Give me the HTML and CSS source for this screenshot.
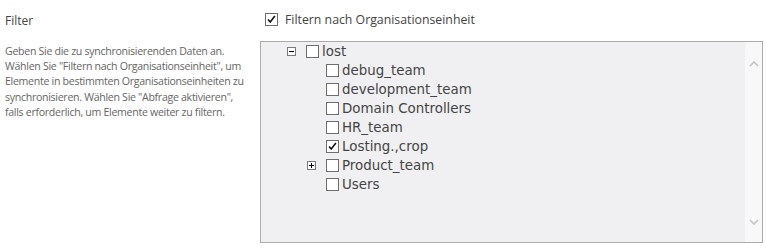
FILE: index.html
```html
<!DOCTYPE html>
<html lang="de">
<head>
  <meta charset="UTF-8" />
  <title>Filter</title>
  <link rel="stylesheet" href="styles.css">
</head>
<body>
  <div class="section">
    <div class="desc">
      <h3 class="title">Filter</h3>
      <p>Geben Sie die zu synchronisierenden Daten an.<br>
        Wählen Sie "Filtern nach Organisationseinheit", um<br>
        Elemente in bestimmten Organisationseinheiten zu<br>
        synchronisieren. Wählen Sie "Abfrage aktivieren",<br>
        falls erforderlich, um Elemente weiter zu filtern.</p>
    </div>

    <div class="controls">
      <label class="option">
        <span class="box checked"><svg viewBox="0 0 13 13"><path d="M2.5 6.5 L5 9.5 L10.5 2.5" /></svg></span>
        Filtern nach Organisationseinheit
      </label>

      <div class="tree">
        <ul class="nodes">
          <li>
            <div class="node">
              <span class="toggle open" title="Reduzieren"></span>
              <span class="box"></span>
              <span class="name">lost</span>
            </div>
            <ul class="nodes">
              <li><div class="node"><span class="toggle"></span><span class="box"></span><span class="name">debug_team</span></div></li>
              <li><div class="node"><span class="toggle"></span><span class="box"></span><span class="name">development_team</span></div></li>
              <li><div class="node"><span class="toggle"></span><span class="box"></span><span class="name">Domain Controllers</span></div></li>
              <li><div class="node"><span class="toggle"></span><span class="box"></span><span class="name">HR_team</span></div></li>
              <li><div class="node"><span class="toggle"></span><span class="box checked"><svg viewBox="0 0 13 13"><path d="M2.5 6.5 L5 9.5 L10.5 2.5" /></svg></span><span class="name">Losting.,crop</span></div></li>
              <li><div class="node"><span class="toggle closed" title="Erweitern"></span><span class="box"></span><span class="name">Product_team</span></div></li>
              <li><div class="node"><span class="toggle"></span><span class="box"></span><span class="name">Users</span></div></li>
            </ul>
          </li>
        </ul>

        <div class="scrollbar">
          <svg viewBox="0 0 10 6"><path d="M1 5 L5 1 L9 5" /></svg>
          <svg viewBox="0 0 10 6"><path d="M1 1 L5 5 L9 1" /></svg>
        </div>
      </div>
    </div>
  </div>
</body>
</html>
```

FILE: styles.css
```css
body {
  margin: 0;
  background: #fff;
  font-family: "Open Sans", sans-serif;
  color: #444;
}

.section {
  display: flex;
}

.desc {
  width: 255px;
  padding-left: 5px;
  flex-shrink: 0;
}

.title {
  margin: 12px 0 0;
  font-size: 12px;
  font-weight: normal;
  color: #444;
}

.desc p {
  margin: 15px 0 0;
  font-size: 10.6px;
  line-height: 15.2px;
  letter-spacing: -0.3px;
  white-space: nowrap;
  color: #666;
}

.controls {
  padding-top: 11px;
}

.option {
  display: flex;
  align-items: center;
  height: 17px;
  margin-left: 5px;
  font-size: 12.3px;
  color: #444;
}

.option .box {
  margin-right: 7px;
}

.box {
  display: inline-block;
  width: 13px;
  height: 13px;
  box-sizing: border-box;
  border: 1px solid #6e6e6e;
  background: #fff;
  flex-shrink: 0;
}

.box svg {
  display: block;
  width: 11px;
  height: 11px;
}

.box path {
  fill: none;
  stroke: #111;
  stroke-width: 1.9;
}

.tree {
  position: relative;
  margin-top: 13px;
  width: 503px;
  height: 202px;
  box-sizing: border-box;
  border: 1px solid #ababab;
  background: #f0f0f2;
  font-family: "DejaVu Sans", Verdana, sans-serif;
  font-size: 13.4px;
  color: #444;
}

.nodes {
  list-style: none;
  margin: 0;
  padding: 0 0 0 20px;
}

.tree > .nodes {
  padding-left: 26px;
}

.node {
  display: flex;
  align-items: center;
  height: 19px;
}

.toggle {
  position: relative;
  width: 9px;
  height: 9px;
  margin-right: 10px;
  box-sizing: border-box;
  flex-shrink: 0;
}

.toggle.open,
.toggle.closed {
  border: 1px solid #7a7a7a;
  background: #fff;
}

/* minus / plus strokes */
.toggle.open::before,
.toggle.closed::before {
  content: "";
  position: absolute;
  left: 1px;
  top: 3px;
  width: 5px;
  height: 1px;
  background: #000;
}

.toggle.closed::after {
  content: "";
  position: absolute;
  left: 3px;
  top: 1px;
  width: 1px;
  height: 5px;
  background: #000;
}

.name {
  margin-left: 3px;
  white-space: nowrap;
}

.scrollbar {
  position: absolute;
  top: 0;
  right: 0;
  bottom: 0;
  width: 17px;
  background: #f8f8f8;
  display: flex;
  flex-direction: column;
  justify-content: space-between;
  align-items: center;
  padding: 19px 0 17px;
  box-sizing: border-box;
}

.scrollbar svg {
  width: 10px;
  height: 6px;
}

.scrollbar path {
  fill: none;
  stroke: #c4c4c4;
  stroke-width: 1.6;
}
```
